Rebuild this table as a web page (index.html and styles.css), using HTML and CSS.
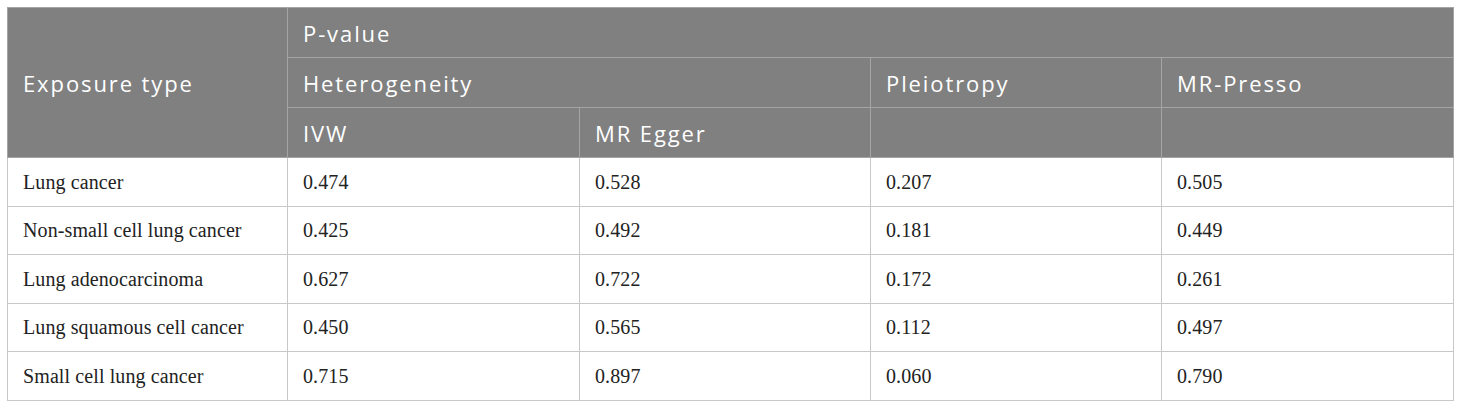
FILE: index.html
```html
<!DOCTYPE html>
<html>
<head>
<meta charset="utf-8">
<link rel="stylesheet" href="styles.css">
</head>
<body>
<table class="tbl">
  <colgroup>
    <col class="c1"><col class="c2"><col class="c3"><col class="c4"><col class="c5">
  </colgroup>
  <thead>
    <tr class="h1">
      <th rowspan="3">Exposure type</th>
      <th colspan="4">P-value</th>
    </tr>
    <tr class="h2">
      <th colspan="2">Heterogeneity</th>
      <th>Pleiotropy</th>
      <th>MR-Presso</th>
    </tr>
    <tr class="h3">
      <th>IVW</th>
      <th>MR Egger</th>
      <th></th>
      <th></th>
    </tr>
  </thead>
  <tbody>
    <tr><td>Lung cancer</td><td>0.474</td><td>0.528</td><td>0.207</td><td>0.505</td></tr>
    <tr><td>Non-small cell lung cancer</td><td>0.425</td><td>0.492</td><td>0.181</td><td>0.449</td></tr>
    <tr><td>Lung adenocarcinoma</td><td>0.627</td><td>0.722</td><td>0.172</td><td>0.261</td></tr>
    <tr><td>Lung squamous cell cancer</td><td>0.450</td><td>0.565</td><td>0.112</td><td>0.497</td></tr>
    <tr><td>Small cell lung cancer</td><td>0.715</td><td>0.897</td><td>0.060</td><td>0.790</td></tr>
  </tbody>
</table>
</body>
</html>
```

FILE: styles.css
```css
html, body {
  margin: 0;
  padding: 0;
  background: #ffffff;
}
body {
  padding: 7px 0 0 7px;
}
.tbl {
  border-collapse: collapse;
  table-layout: fixed;
  width: 1446px;
}
.c1 { width: 280px; }
.c2 { width: 292px; }
.c3 { width: 291px; }
.c4 { width: 291px; }
.c5 { width: 292px; }
.tbl th {
  background: #7f807f;
  color: #ffffff;
  font-family: "Open Sans", "Noto Sans", sans-serif;
  font-weight: 400;
  font-size: 22px;
  letter-spacing: 1.9px;
  text-align: left;
  vertical-align: middle;
  padding: 0 0 0 15px;
  height: 49px;
  border: 1px solid #a3a4a3;
  line-height: 1;
}
.tbl td {
  font-family: "Liberation Serif", "Times New Roman", serif;
  font-size: 20px;
  letter-spacing: 0.1px;
  color: #222222;
  padding: 0 0 0 15px;
  height: 47.5px;
  border: 1px solid #c8c8c8;
  line-height: 1;
}
```
